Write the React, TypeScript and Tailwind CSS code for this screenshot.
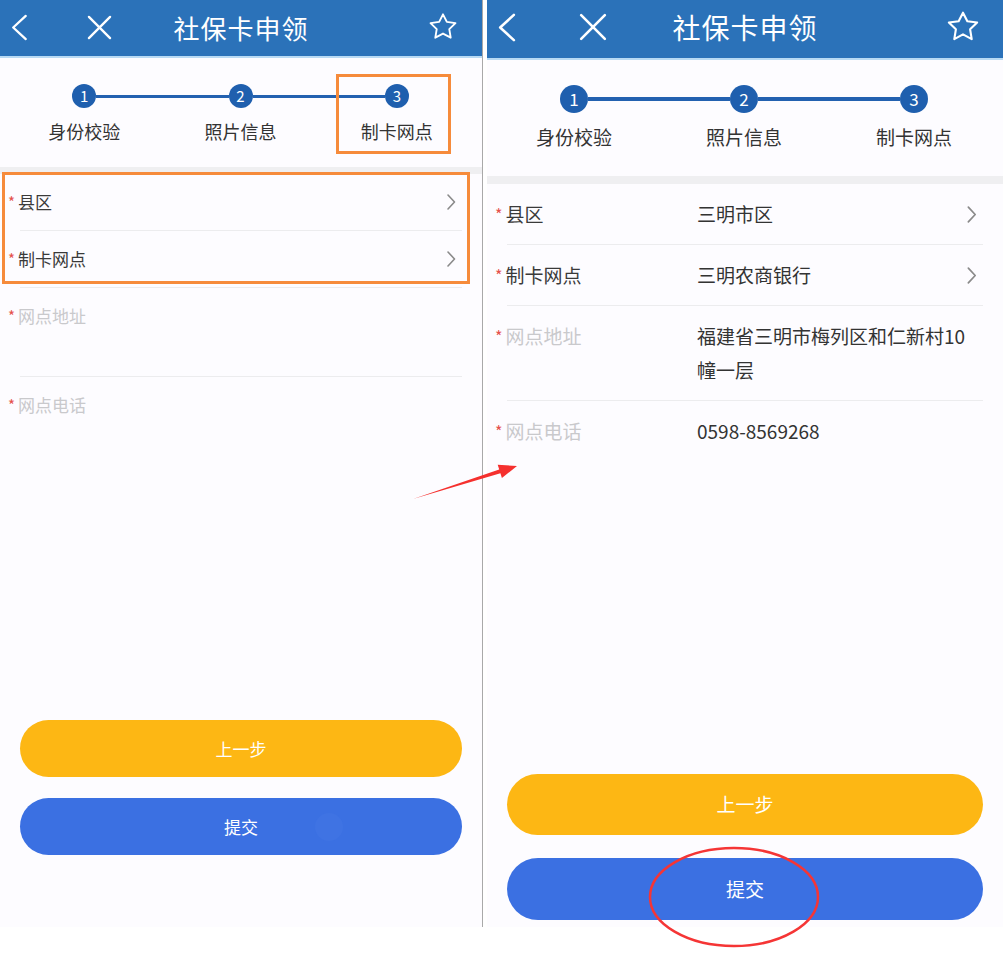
import clsx from "clsx";

/** One field row of the card-application form. */
interface Field {
  label: string;
  value?: string;
  muted?: boolean;
  picker?: boolean;
  tall?: boolean;
}

const STEPS = ["身份校验", "照片信息", "制卡网点"];

const EMPTY_FIELDS: Field[] = [
  { label: "县区", picker: true },
  { label: "制卡网点", picker: true },
  { label: "网点地址", muted: true, tall: true },
  { label: "网点电话", muted: true },
];

const FILLED_FIELDS: Field[] = [
  { label: "县区", value: "三明市区", picker: true },
  { label: "制卡网点", value: "三明农商银行", picker: true },
  { label: "网点地址", value: "福建省三明市梅列区和仁新村10幢一层", muted: true, tall: true },
  { label: "网点电话", value: "0598-8569268", muted: true },
];

const BackIcon = ({ big }: { big: boolean }) => (
  <svg viewBox="0 0 18 28" className={big ? "w-[19px] h-[31px]" : "w-[18px] h-[27px]"}>
    <polyline points="16,2 3,14 16,26" fill="none" stroke="white" strokeWidth="2.4" strokeLinecap="round" strokeLinejoin="round" />
  </svg>
);

const CloseIcon = ({ big }: { big: boolean }) => (
  <svg viewBox="0 0 26 26" className={big ? "w-[28px] h-[28px]" : "w-[25px] h-[25px]"}>
    <path d="M2 2 L24 24 M24 2 L2 24" stroke="white" strokeWidth="2.4" strokeLinecap="round" />
  </svg>
);

const StarIcon = ({ big }: { big: boolean }) => (
  <svg viewBox="0 0 32 32" className={big ? "w-[34px] h-[34px]" : "w-[30px] h-[30px]"}>
    <polygon
      points="16,2.5 20.1,10.6 29.3,11.8 22.7,18.2 24.2,27.4 16,23 7.8,27.4 9.3,18.2 2.7,11.8 11.9,10.6"
      fill="none"
      stroke="white"
      strokeWidth="2"
      strokeLinejoin="round"
    />
  </svg>
);

const ChevronRight = ({ big }: { big: boolean }) => (
  <svg viewBox="0 0 10 18" className={big ? "w-[11px] h-[19px]" : "w-[10px] h-[18px]"}>
    <polyline points="2,2 8.5,9 2,16" fill="none" stroke="#8a8a8a" strokeWidth="1.6" strokeLinecap="round" strokeLinejoin="round" />
  </svg>
);

const Header = ({ big }: { big: boolean }) => (
  <div
    className={clsx(
      "grid grid-cols-[130px_1fr_130px] items-center bg-[#2b72b9] border-b-2 border-[#b8daf4] text-white",
      big ? "h-[60px]" : "h-[58px]"
    )}
  >
    <div className={clsx("flex items-center", big ? "pl-[10px] gap-[63px] -mt-[4px]" : "pl-[10px] gap-[59px] -mt-[2px]")}>
      <BackIcon big={big} />
      <CloseIcon big={big} />
    </div>
    <div className={clsx("text-center tracking-[1px]", big ? "text-[28px] -mt-[4px]" : "text-[26px] -mt-[2px]")}>社保卡申领</div>
    <div className={clsx("flex justify-end", big ? "pr-[23px] -mt-[4px]" : "pr-[24px] -mt-[2px]")}>
      <StarIcon big={big} />
    </div>
  </div>
);

const Stepper = ({ big }: { big: boolean }) => (
  <div className={clsx("grid grid-cols-3", big ? "pl-[2px] pr-[4px] pt-[25px] pb-[26px]" : "pl-[6px] pr-[7px] pt-[26px] pb-[24px]")}>
    {STEPS.map((name, i) => (
      <div key={name} className="flex flex-col items-center">
        <div className="flex items-center w-full">
          <div className={clsx("flex-1", big ? "h-[4px]" : "h-[3px]", i === 0 ? "bg-transparent" : "bg-[#2361b0]")} />
          <div
            className={clsx(
              "flex items-center justify-center rounded-full bg-[#1f5fae] text-white",
              big ? "w-[28px] h-[28px] text-[17px]" : "w-[24px] h-[24px] text-[15px]"
            )}
          >
            {i + 1}
          </div>
          <div className={clsx("flex-1", big ? "h-[4px]" : "h-[3px]", i === 2 ? "bg-transparent" : "bg-[#2361b0]")} />
        </div>
        <div className={clsx("text-[#333]", big ? "text-[19px] leading-[26px] mt-[11px]" : "text-[18px] leading-[24px] mt-[11px]")}>
          {name}
        </div>
      </div>
    ))}
  </div>
);

const FieldRow = ({ field, big, last }: { field: Field; big: boolean; last: boolean }) => (
  <div>
    <div
      className={clsx(
        "flex items-start",
        big ? "pl-[8px] pr-[26px] py-[13px] text-[19px] leading-[34px]" : "pl-[8px] pr-[26px] py-[14px] text-[17px] leading-[28px]"
      )}
    >
      <div className={clsx("flex items-center shrink-0", big ? "w-[202px]" : "w-[200px]")}>
        <span className={clsx("text-[#e5504c] mr-[3px]", big ? "text-[16px]" : "text-[15px]")}>*</span>
        <span className={field.muted ? "text-[#c9c9cc]" : "text-[#3a3a3a]"}>{field.label}</span>
      </div>
      <div className={clsx("flex-1 text-[#333]", field.tall && (big ? "min-h-[68px]" : "min-h-[60px]"))}>{field.value}</div>
      {field.picker && (
        <div className={clsx("flex items-center", big ? "h-[34px]" : "h-[28px]")}>
          <ChevronRight big={big} />
        </div>
      )}
    </div>
    {!last && <div className="h-px bg-[#ececee] mx-[20px]" />}
  </div>
);

const Phone = ({ big, fields }: { big: boolean; fields: Field[] }) => (
  <div className={clsx("flex flex-col h-[927px] bg-[#fdfcff]", big ? "w-[516px]" : "w-[482px]")}>
    <Header big={big} />
    <Stepper big={big} />
    <div className={clsx("bg-[#efeff1]", big ? "h-[8px]" : "h-[7px]")} />
    {fields.map((field, i) => (
      <FieldRow key={field.label} field={field} big={big} last={i === fields.length - 1} />
    ))}
    <div className="flex-1" />
    <div className={clsx("flex flex-col px-[20px]", big ? "gap-[23px] pb-[7px]" : "gap-[21px] pb-[72px]")}>
      <button
        className={clsx(
          "rounded-full bg-[#fdb714] text-white",
          big ? "h-[61px] text-[19px]" : "h-[57px] text-[17px]"
        )}
      >
        上一步
      </button>
      <button
        className={clsx(
          "relative rounded-full bg-[#3b70e2] text-white",
          big ? "h-[62px] text-[19px]" : "h-[57px] text-[17px]"
        )}
      >
        提交
        {!big && <span className="absolute left-[295px] top-[15px] w-[28px] h-[28px] rounded-full bg-[#3f73e3]" />}
      </button>
    </div>
  </div>
);

/** Annotation marks drawn over the two screens. */
const Annotations = () => (
  <>
    <div className="absolute left-[336px] top-[74px] w-[115px] h-[80px] border-[3px] border-[#f68b3b]" />
    <div className="absolute left-[2px] top-[172px] w-[468px] h-[112px] border-[3px] border-[#f68b3b]" />
    <svg className="absolute left-0 top-0 w-[1007px] h-[974px] pointer-events-none" viewBox="0 0 1007 974">
      <polygon
        points="413,499 499.2,469.5 497.7,464.7 517,466 501.9,478.1 500.4,473.3"
        fill="#f5302e"
      />
      <ellipse cx="734" cy="897" rx="84" ry="49" fill="none" stroke="#f53535" strokeWidth="2.5" />
    </svg>
  </>
);

export default function App() {
  return (
    <div className="relative w-[1007px] h-[974px] bg-white overflow-hidden font-['Noto_Sans_CJK_SC','Noto_Sans',sans-serif]">
      <div className="flex">
        <Phone big={false} fields={EMPTY_FIELDS} />
        <div className="w-px h-[927px] bg-[#a9a9a9]" />
        <div className="w-[4px]" />
        <Phone big={true} fields={FILLED_FIELDS} />
      </div>
      <Annotations />
    </div>
  );
}
